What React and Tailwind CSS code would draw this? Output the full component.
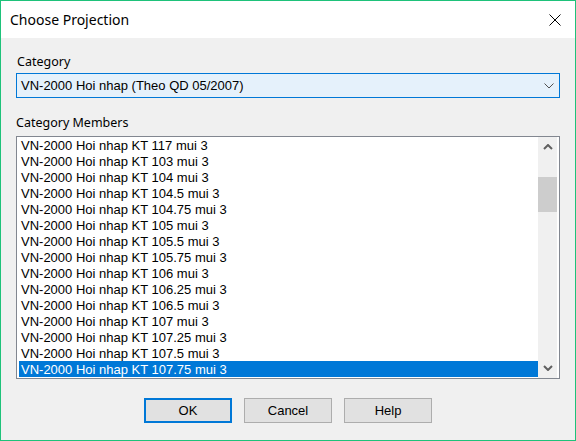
import React, { useState } from "react";

const zones = [
  "117",
  "103",
  "104",
  "104.5",
  "104.75",
  "105",
  "105.5",
  "105.75",
  "106",
  "106.25",
  "106.5",
  "107",
  "107.25",
  "107.5",
  "107.75",
];

const members = zones.map((z) => `VN-2000 Hoi nhap KT ${z} mui 3`);

const uiFont = { fontFamily: '"Noto Sans", "Open Sans", sans-serif' };
const listFont = { fontFamily: '"Liberation Sans", Arial, sans-serif' };

const App = () => {
  const [selected, setSelected] = useState(members.length - 1);

  return (
    <div
      className="w-[576px] h-[441px] flex flex-col bg-[#f0f0f0] border border-[#1ec27a] text-black"
      style={uiFont}
    >
      {/* Title bar */}
      <div className="h-[37px] bg-white flex items-center justify-between pl-[9px] pr-[14px]">
        <p className="text-[14px] leading-none">Choose Projection</p>
        <svg width="12" height="12" viewBox="0 0 12 12">
          <path d="M0.5 0.5 L11.5 11.5 M11.5 0.5 L0.5 11.5" stroke="#000" strokeWidth="1" />
        </svg>
      </div>

      <div className="flex flex-col px-[15px] pt-[16px]">
        <p className="text-[12.5px] leading-[16px] pl-[1px]">Category</p>

        {/* Combo box */}
        <div className="mt-[3px] h-[25px] flex items-center justify-between border border-[#0078d7] bg-[#e5f1fb] pl-[4px] pr-[5px]">
          <span className="text-[13px] leading-none" style={listFont}>
            VN-2000 Hoi nhap (Theo QD 05/2007)
          </span>
          <svg width="10" height="6" viewBox="0 0 10 6">
            <path d="M0.5 0.5 L5 5 L9.5 0.5" fill="none" stroke="#505050" strokeWidth="1" />
          </svg>
        </div>

        <p className="mt-[17px] text-[12.5px] leading-[16px]">Category Members</p>

        {/* List box */}
        <div className="mt-[5px] h-[243px] flex border border-[#828790] bg-white pl-[2px] pr-[2px]">
          <div className="flex-1 flex flex-col" style={listFont}>
            {members.map((m, i) => (
              <div
                key={m}
                onClick={() => setSelected(i)}
                className={`h-[16px] flex items-center pl-[2px] text-[13px] leading-none ${
                  i === selected ? "bg-[#0078d7] text-white" : ""
                }`}
              >
                {m}
              </div>
            ))}
          </div>

          {/* Scrollbar */}
          <div className="w-[19px] bg-[#f0f0f0] flex flex-col">
            <div className="h-[17px] flex items-center justify-center mt-[1px]">
              <svg width="10" height="6" viewBox="0 0 10 6">
                <path d="M1 5 L5 1 L9 5" fill="none" stroke="#606060" strokeWidth="2" />
              </svg>
            </div>
            <div className="mt-[22px] h-[35px] bg-[#cdcdcd]" />
            <div className="flex-1" />
            <div className="h-[17px] flex items-center justify-center mb-[2px]">
              <svg width="10" height="6" viewBox="0 0 10 6">
                <path d="M1 1 L5 5 L9 1" fill="none" stroke="#606060" strokeWidth="2" />
              </svg>
            </div>
          </div>
        </div>

        {/* Buttons */}
        <div className="mt-[19px] flex justify-center gap-[12px] text-[13px]" style={listFont}>
          <button className="w-[88px] h-[25px] bg-[#e1e1e1] border-2 border-[#0078d7]">OK</button>
          <button className="w-[88px] h-[25px] bg-[#e1e1e1] border border-[#adadad]">Cancel</button>
          <button className="w-[88px] h-[25px] bg-[#e1e1e1] border border-[#adadad]">Help</button>
        </div>
      </div>
    </div>
  );
};

export default App;
